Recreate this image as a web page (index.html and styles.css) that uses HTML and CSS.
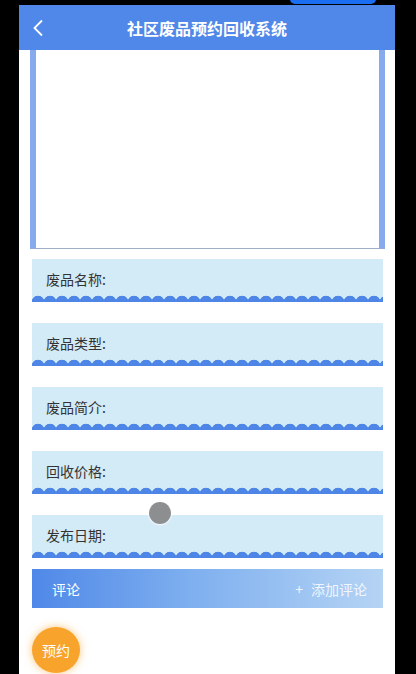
FILE: index.html
```html
<!DOCTYPE html>
<html lang="zh-CN">
<head>
  <meta charset="UTF-8" />
  <meta name="viewport" content="width=device-width, initial-scale=1.0" />
  <title>社区废品预约回收系统</title>
  <link rel="stylesheet" href="styles.css">
</head>
<body>
  <div class="status-pill"></div>

  <div class="page">
    <header class="nav">
      <span class="back">
        <svg width="12" height="18" viewBox="0 0 12 18"><path d="M10 1.5 L2.5 9 L10 16.5" fill="none" stroke="#fff" stroke-width="1.8"/></svg>
      </span>
      <h1>社区废品预约回收系统</h1>
    </header>

    <div class="photo"></div>

    <div class="field">废品名称:</div>
    <div class="field">废品类型:</div>
    <div class="field">废品简介:</div>
    <div class="field">回收价格:</div>
    <div class="field">发布日期:</div>

    <div class="comments">
      <span>评论</span>
      <span class="add"><span class="plus">+</span>添加评论</span>
    </div>

    <button class="book">预约</button>
  </div>

  <div class="touch"></div>
</body>
</html>
```

FILE: styles.css
```css
body {
  margin: 0;
  background: #000;
  font-family: "Noto Sans CJK SC", "Noto Sans", sans-serif;
  height: 674px;
  overflow: hidden;
}
.status-pill {
  position: absolute;
  left: 290px;
  top: -6px;
  width: 86px;
  height: 10px;
  border-radius: 6px;
  background: #1a6ef2;
}
.page {
  width: 376px;
  margin: 5px 0 0 19px;
  background: #fff;
  height: 669px;
}
.nav {
  height: 45px;
  background: #4f88e8;
  display: flex;
  align-items: center;
  justify-content: center;
  position: relative;
}
.nav h1 {
  margin: 0;
  font-size: 16px;
  font-weight: bold;
  color: #fff;
}
.back {
  position: absolute;
  left: 13px;
  top: 13px;
}
.photo {
  margin: 0 10px 0 11px;
  height: 198px;
  border-left: 6px solid #86aaec;
  border-right: 6px solid #86aaec;
  border-bottom: 1px solid #9eaec4;
  background: #fff;
}
.field {
  margin: 10px 12px 21px 13px;
  height: 43px;
  background: #d3eaf7;
  color: #333;
  font-size: 14px;
  padding-left: 14px;
  line-height: 40px;
  position: relative;
  box-sizing: border-box;
}
.field::after {
  content: "";
  position: absolute;
  left: 0;
  right: 0;
  bottom: 0;
  height: 7px;
  background:
    radial-gradient(circle at 50% 7px, #4d86e6 6px, transparent 6.6px) 0 0 / 12px 7px repeat-x;
  border-bottom: 1px solid #4d86e6;
  box-sizing: border-box;
}
.field + .field {
  margin-top: 0;
}
.field:nth-last-of-type(1) {
  margin-bottom: 0;
}
.comments {
  margin: -10px 12px 0 13px;
  height: 39px;
  background: linear-gradient(to right, #4f88e8, #7eafef 45%, #b5d4f4);
  display: flex;
  align-items: center;
  justify-content: space-between;
  padding: 0 16px 0 20px;
  color: #fff;
  font-size: 14px;
}
.comments .add {
  color: rgba(255, 255, 255, 0.85);
}
.comments .plus {
  margin-right: 8px;
}
.book {
  margin: 19px 0 0 13px;
  width: 48px;
  height: 46px;
  border-radius: 50%;
  border: none;
  background: #f8a42c;
  color: #fff;
  font-family: inherit;
  font-size: 14px;
  box-shadow: 0 0 8px rgba(248, 164, 44, 0.6);
  padding: 0;
}
.touch {
  position: absolute;
  left: 149px;
  top: 502px;
  width: 22px;
  height: 22px;
  border-radius: 50%;
  background: #8c8e90;
  box-shadow: 0 0 2px 1px rgba(255, 255, 255, 0.8);
}
```
